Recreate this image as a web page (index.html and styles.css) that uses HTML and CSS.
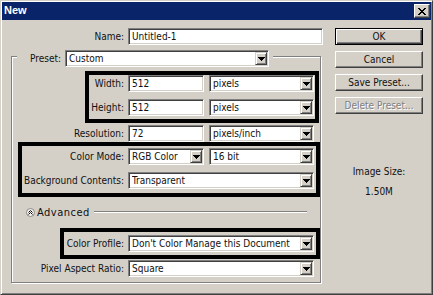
FILE: index.html
```html
<!DOCTYPE html>
<html>
<head>
<meta charset="utf-8">
<link rel="stylesheet" href="styles.css">
</head>
<body>
<div class="window">
  <div class="titlebar">
    <span class="title">New</span>
    <span class="close"><svg width="8" height="7" viewBox="0 0 8 7"><path d="M0 0h2v1H0z M6 0h2v1H6z M1 1h2v1H1z M5 1h2v1H5z M2 2h4v1H2z M3 3h2v1H3z M2 4h4v1H2z M1 5h2v1H1z M5 5h2v1H5z M0 6h2v1H0z M6 6h2v1H6z" fill="#000"/></svg></span>
  </div>
  <div class="main">
    <div class="left">
      <div class="row name-row">
        <span class="lbl">Name:</span>
        <div class="field w-name">Untitled-1</div>
      </div>
      <div class="group">
        <div class="legend">
          <span class="lbl">Preset:</span>
          <div class="field select w-preset"><span class="val">Custom</span><span class="arrow"><svg width="7" height="4" viewBox="0 0 7 4"><path d="M0 0h7v1h-1v1h-1v1h-1v1h-1v-1h-1v-1h-1v-1h-1z"/></svg></span></div>
        </div>
        <div class="box box1">
          <div class="row">
            <span class="lbl">Width:</span>
            <div class="field w-num">512</div>
            <div class="field select w-unit"><span class="val">pixels</span><span class="arrow"><svg width="7" height="4" viewBox="0 0 7 4"><path d="M0 0h7v1h-1v1h-1v1h-1v1h-1v-1h-1v-1h-1v-1h-1z"/></svg></span></div>
          </div>
          <div class="row row-gap">
            <span class="lbl">Height:</span>
            <div class="field w-num">512</div>
            <div class="field select w-unit"><span class="val">pixels</span><span class="arrow"><svg width="7" height="4" viewBox="0 0 7 4"><path d="M0 0h7v1h-1v1h-1v1h-1v1h-1v-1h-1v-1h-1v-1h-1z"/></svg></span></div>
          </div>
        </div>
        <div class="row res-row">
          <span class="lbl">Resolution:</span>
          <div class="field w-num">72</div>
          <div class="field select w-unit"><span class="val">pixels/inch</span><span class="arrow"><svg width="7" height="4" viewBox="0 0 7 4"><path d="M0 0h7v1h-1v1h-1v1h-1v1h-1v-1h-1v-1h-1v-1h-1z"/></svg></span></div>
        </div>
        <div class="box box2">
          <div class="row">
            <span class="lbl">Color Mode:</span>
            <div class="field select w-num"><span class="val">RGB Color</span><span class="arrow"><svg width="7" height="4" viewBox="0 0 7 4"><path d="M0 0h7v1h-1v1h-1v1h-1v1h-1v-1h-1v-1h-1v-1h-1z"/></svg></span></div>
            <div class="field select w-unit"><span class="val">16 bit</span><span class="arrow"><svg width="7" height="4" viewBox="0 0 7 4"><path d="M0 0h7v1h-1v1h-1v1h-1v1h-1v-1h-1v-1h-1v-1h-1z"/></svg></span></div>
          </div>
          <div class="row row-gap">
            <span class="lbl">Background Contents:</span>
            <div class="field select w-full"><span class="val">Transparent</span><span class="arrow"><svg width="7" height="4" viewBox="0 0 7 4"><path d="M0 0h7v1h-1v1h-1v1h-1v1h-1v-1h-1v-1h-1v-1h-1z"/></svg></span></div>
          </div>
        </div>
        <div class="adv">
          <span class="adv-icon"><svg width="9" height="9" viewBox="0 0 9 9"><circle cx="4.5" cy="4.5" r="4" fill="#f4f3ef" stroke="#8a8780" stroke-width="1"/><path d="M2.5 4.5L4.5 2.5L6.5 4.5M2.5 6.5L4.5 4.5L6.5 6.5" fill="none" stroke="#000" stroke-width="1"/></svg></span>
          <span class="adv-text">Advanced</span>
          <span class="adv-line"></span>
        </div>
        <div class="box box3">
          <div class="row">
            <span class="lbl">Color Profile:</span>
            <div class="field select w-full"><span class="val">Don't Color Manage this Document</span><span class="arrow"><svg width="7" height="4" viewBox="0 0 7 4"><path d="M0 0h7v1h-1v1h-1v1h-1v1h-1v-1h-1v-1h-1v-1h-1z"/></svg></span></div>
          </div>
        </div>
        <div class="row par-row">
          <span class="lbl">Pixel Aspect Ratio:</span>
          <div class="field select w-full"><span class="val">Square</span><span class="arrow"><svg width="7" height="4" viewBox="0 0 7 4"><path d="M0 0h7v1h-1v1h-1v1h-1v1h-1v-1h-1v-1h-1v-1h-1z"/></svg></span></div>
        </div>
      </div>
    </div>
    <div class="right">
      <div class="btn ok">OK</div>
      <div class="btn">Cancel</div>
      <div class="btn">Save Preset...</div>
      <div class="btn disabled">Delete Preset...</div>
      <div class="info">Image Size:</div>
      <div class="info info-val">1.50M</div>
    </div>
  </div>
</div>
</body>
</html>
```

FILE: styles.css
```css
* { box-sizing: border-box; margin: 0; padding: 0; }
body {
  margin: 0;
  background: #d4d0c8;
  font-family: "DejaVu Sans Condensed", "DejaVu Sans", "Liberation Sans", sans-serif;
  font-stretch: condensed;
  font-size: 10px;
  color: #111;
}
.window {
  width: 433px;
  height: 295px;
  border: 1px solid;
  border-color: #d4d0c8 #404040 #404040 #d4d0c8;
  box-shadow: inset 1px 1px #fff, inset -1px -1px #808080;
  padding: 1px;
  background: #d4d0c8;
  display: flex;
  flex-direction: column;
}
.titlebar {
  height: 18px;
  flex: none;
  background: #0a246a;
  display: flex;
  align-items: flex-start;
  padding-left: 2px;
}
.title {
  color: #fff;
  font: bold 11px "Liberation Sans", sans-serif;
  line-height: 17px;
}
.close {
  margin: 2px 1px 0 auto;
  width: 16px;
  height: 14px;
  background: #d4d0c8;
  border: 1px solid;
  border-color: #fff #404040 #404040 #fff;
  box-shadow: inset -1px -1px #808080;
  display: flex;
  align-items: center;
  justify-content: center;
}
.close svg { display: block; }
.main {
  display: flex;
  padding-left: 9px;
}
.left {
  width: 312px;
  flex: none;
}
.right {
  width: 88px;
  margin-left: 12px;
  flex: none;
  display: flex;
  flex-direction: column;
}
.row {
  display: flex;
  align-items: center;
  height: 17px;
}
.lbl {
  flex: none;
  text-align: right;
  margin-right: 4px;
  white-space: nowrap;
}
.name-row { margin-top: 8px; }
.name-row .lbl { width: 113px; }
.field {
  flex: none;
  height: 17px;
  background: #fff;
  border: 1px solid;
  border-color: #808080 #fff #fff #808080;
  box-shadow: inset 1px 1px #404040, inset -1px -1px #d4d0c8;
  display: flex;
  align-items: center;
  padding: 0 1px 0 3px;
  white-space: nowrap;
  overflow: hidden;
}
.select .val { flex: 1; overflow: hidden; }
.arrow {
  flex: none;
  width: 12px;
  height: 13px;
  background: #d4d0c8;
  border: 1px solid;
  border-color: #d4d0c8 #404040 #404040 #d4d0c8;
  box-shadow: inset 1px 1px #fff, inset -1px -1px #808080;
  display: flex;
  align-items: center;
  justify-content: center;
}
.arrow svg { display: block; }
.w-name { width: 195px; }
.w-preset { width: 204px; }
.w-num { width: 76px; }
.w-unit { width: 105px; margin-left: 5px; }
.w-full { width: 186px; }
.group {
  width: 310px;
  margin-top: 11px;
  border: 1px solid #808080;
  box-shadow: inset 1px 1px #fff, 1px 1px #fff;
  padding-bottom: 5px;
}
.group > .row .lbl { width: 112px; }
.legend {
  display: flex;
  align-items: center;
  width: max-content;
  height: 17px;
  margin: -7px 0 0 5px;
  padding-right: 4px;
  background: #d4d0c8;
}
.legend .lbl { width: 44px; }
.box { border: 4px solid #000; }
.row-gap { margin-top: 7px; }
.box1 {
  margin: 4px 1px 0 73px;
  padding-bottom: 3px;
}
.box1 .lbl { width: 35px; }
.res-row { margin-top: 2px; }
.box2 {
  margin-left: 6px;
  padding: 2px 0 4px;
}
.box2 .lbl { width: 102px; }
.adv {
  display: flex;
  align-items: center;
  height: 16px;
  margin-top: 7px;
  padding-left: 14px;
}
.adv-icon svg { display: block; }
.adv-text {
  margin-left: 2px;
  font-size: 11px;
  letter-spacing: 0.5px;
}
.adv-line {
  flex: 1;
  height: 2px;
  margin: 0 13px 0 4px;
  border-top: 1px solid #808080;
  border-bottom: 1px solid #fff;
}
.box3 {
  margin: 8px 0 0 48px;
  padding: 3px 0 3px;
}
.box3 .lbl { width: 60px; }
.par-row { margin-top: 1px; }
.btn {
  height: 17px;
  margin-top: 6px;
  background: #d4d0c8;
  border: 1px solid;
  border-color: #fff #404040 #404040 #fff;
  box-shadow: inset -1px -1px #808080;
  display: flex;
  align-items: center;
  justify-content: center;
  white-space: nowrap;
}
.btn.ok {
  margin-top: 8px;
  border-color: #000;
  box-shadow: inset 1px 1px #fff, inset -1px -1px #404040, inset -2px -2px #808080;
}
.btn.disabled {
  color: #808080;
  text-shadow: 1px 1px #fff;
}
.info {
  text-align: center;
  line-height: 13px;
  margin-top: 51px;
}
.info-val { margin-top: 7px; }
```
